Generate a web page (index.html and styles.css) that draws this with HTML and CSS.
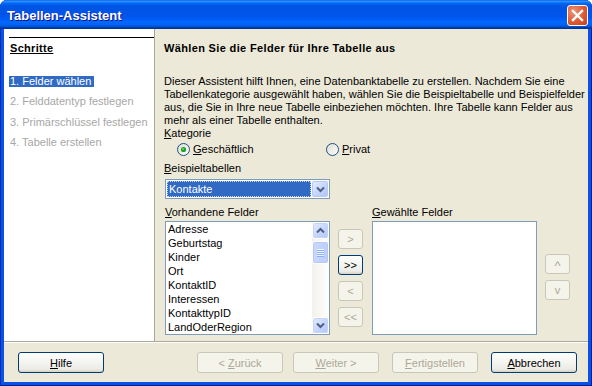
FILE: index.html
```html
<!DOCTYPE html>
<html lang="de">
<head>
<meta charset="utf-8">
<title>Tabellen-Assistent</title>
<link rel="stylesheet" href="styles.css">
</head>
<body>
<div class="window">
  <div class="titlebar">
    <span class="title">Tabellen-Assistent</span>
    <span class="close">
      <svg width="13" height="13" viewBox="0 0 13 13"><path d="M2 2 L11 11 M11 2 L2 11" stroke="#fff" stroke-width="2.4" stroke-linecap="square"/></svg>
    </span>
  </div>
  <div class="client">
    <div class="main">
      <div class="steps">
        <div class="steps-head">Schritte</div>
        <ul class="step-list">
          <li class="step"><span class="step-text active">1. Felder wählen</span></li>
          <li class="step"><span class="step-text">2. Felddatentyp festlegen</span></li>
          <li class="step"><span class="step-text">3. Primärschlüssel festlegen</span></li>
          <li class="step"><span class="step-text">4. Tabelle erstellen</span></li>
        </ul>
      </div>
      <div class="content">
        <h1 class="heading">Wählen Sie die Felder für Ihre Tabelle aus</h1>
        <p class="intro">Dieser Assistent hilft Ihnen, eine Datenbanktabelle zu erstellen. Nachdem Sie eine<br>Tabellenkategorie ausgewählt haben, wählen Sie die Beispieltabelle und Beispielfelder<br>aus, die Sie in Ihre neue Tabelle einbeziehen möchten. Ihre Tabelle kann Felder aus<br>mehr als einer Tabelle enthalten.</p>
        <div class="label"><u>K</u>ategorie</div>
        <div class="radios">
          <label class="radio">
            <svg class="radio-icon" width="13" height="13" viewBox="0 0 13 13">
              <defs><linearGradient id="rg" x1="0" y1="0" x2="1" y2="1"><stop offset="0" stop-color="#DCDBD2"/><stop offset="1" stop-color="#FFFFFF"/></linearGradient></defs>
              <circle cx="6.5" cy="6.5" r="6" fill="url(#rg)" stroke="#1C5180"/>
              <circle cx="6.5" cy="6.5" r="2.6" fill="#21A121"/>
              <circle cx="6" cy="6" r="1" fill="#6FD46F"/>
            </svg>
            <span><u>G</u>eschäftlich</span>
          </label>
          <label class="radio">
            <svg class="radio-icon" width="13" height="13" viewBox="0 0 13 13">
              <circle cx="6.5" cy="6.5" r="6" fill="url(#rg)" stroke="#1C5180"/>
            </svg>
            <span><u>P</u>rivat</span>
          </label>
        </div>
        <div class="label label-gap"><u>B</u>eispieltabellen</div>
        <div class="combo">
          <div class="combo-value">Kontakte</div>
          <div class="combo-btn">
            <svg width="9" height="7" viewBox="0 0 9 7"><path d="M1 1.5 L4.5 5 L8 1.5" fill="none" stroke="#4D6185" stroke-width="2"/></svg>
          </div>
        </div>
        <div class="fields">
          <div class="label field-label"><u>V</u>orhandene Felder</div>
          <div class="label field-label right-label"><u>G</u>ewählte Felder</div>
          <div class="listbox available">
            <ul class="items">
              <li>Adresse</li>
              <li>Geburtstag</li>
              <li>Kinder</li>
              <li>Ort</li>
              <li>KontaktID</li>
              <li>Interessen</li>
              <li>KontakttypID</li>
              <li>LandOderRegion</li>
            </ul>
            <div class="scrollbar">
              <div class="sb-btn">
                <svg width="9" height="7" viewBox="0 0 9 7"><path d="M1 5.5 L4.5 2 L8 5.5" fill="none" stroke="#4D6185" stroke-width="2"/></svg>
              </div>
              <div class="sb-track">
                <div class="sb-thumb"><span></span><span></span><span></span><span></span></div>
              </div>
              <div class="sb-btn">
                <svg width="9" height="7" viewBox="0 0 9 7"><path d="M1 1.5 L4.5 5 L8 1.5" fill="none" stroke="#4D6185" stroke-width="2"/></svg>
              </div>
            </div>
          </div>
          <div class="move-btns">
            <button class="btn small" disabled>&gt;</button>
            <button class="btn small">&gt;&gt;</button>
            <button class="btn small" disabled>&lt;</button>
            <button class="btn small" disabled>&lt;&lt;</button>
          </div>
          <div class="listbox selected"></div>
          <div class="order-btns">
            <button class="btn small caret" disabled>^</button>
            <button class="btn small" disabled>v</button>
          </div>
        </div>
      </div>
    </div>
    <div class="buttonbar">
      <button class="btn wide"><u>H</u>ilfe</button>
      <button class="btn wide back" disabled>&lt; <u>Z</u>urück</button>
      <button class="btn wide next" disabled><u>W</u>eiter &gt;</button>
      <button class="btn wide finish" disabled><u>F</u>ertigstellen</button>
      <button class="btn wide cancel"><u>A</u>bbrechen</button>
    </div>
  </div>
</div>
</body>
</html>
```
FILE: styles.css
```css
html, body {
  margin: 0;
  padding: 0;
  background: #ffffff;
}

body {
  font-family: "Liberation Sans", Arial, sans-serif;
  font-size: 11px;
  color: #000;
}

.window {
  width: 592px;
  height: 386px;
  display: flex;
  flex-direction: column;
  background: #0A52E6;
  border-radius: 7px 7px 0 0;
  box-shadow: inset 1px 0 #0030B0, inset -1px 0 #001C98, inset 0 -1px #001C98;
  overflow: hidden;
}

.titlebar {
  height: 29px;
  flex: none;
  display: flex;
  align-items: center;
  justify-content: space-between;
  padding: 1px 4px 0 7px;
  box-sizing: border-box;
  background: linear-gradient(to bottom, #0058ee 0%, #3593ff 4%, #288eff 6%, #127dff 8%, #036ffc 10%, #0262ee 14%, #0057e5 20%, #0054e3 24%, #0055eb 56%, #005bf5 66%, #026afe 76%, #0062ef 86%, #0052d6 92%, #0040ab 94%, #003092 100%);
  border-radius: 7px 7px 0 0;
}

.title {
  color: #fff;
  font-weight: bold;
  font-size: 13px;
  text-shadow: 1px 1px #0F1089;
}

.close {
  width: 21px;
  height: 21px;
  box-sizing: border-box;
  border: 1px solid #fff;
  border-radius: 3px;
  background: radial-gradient(circle at 30% 30%, #EC9277 0%, #DE5A35 55%, #C4401A 100%);
  display: flex;
  align-items: center;
  justify-content: center;
}

.client {
  flex: 1;
  margin: 0 4px 4px;
  background: #ECE9D8;
  display: flex;
  flex-direction: column;
}

.main {
  height: 312px;
  flex: none;
  display: flex;
  border-bottom: 1px solid #ACA899;
  box-shadow: 0 1px #FFFFFF;
}

.steps {
  width: 151px;
  box-sizing: border-box;
  background: #fff;
  border-right: 1px solid #ACA899;
  padding-left: 5px;
}

.steps-head {
  margin-top: 8px;
  border-top: 1px solid #000;
  padding-top: 4px;
  padding-left: 1px;
  line-height: 13px;
  font-weight: bold;
  letter-spacing: 0.3px;
  text-decoration: underline;
}

.step-list {
  list-style: none;
  margin: 16px 0 0;
  padding: 0;
}

.step {
  height: 20.5px;
  display: flex;
  align-items: center;
}

.step-text {
  line-height: 11px;
  padding: 0 1px;
  color: #A7A7A7;
}

.step-text.active {
  background: #316AC5;
  color: #fff;
  padding-right: 3px;
}

.content {
  flex: 1;
  padding: 12px 0 0 9px;
}

.heading {
  margin: 0;
  font-size: 11px;
  font-weight: bold;
  line-height: 14px;
  letter-spacing: 0.35px;
}

.intro {
  margin: 20px 0 0;
  line-height: 13px;
  white-space: nowrap;
}

.label {
  line-height: 13px;
  white-space: nowrap;
}

.label-gap {
  margin-top: 6px;
}

.radios {
  display: flex;
  margin-top: 3px;
  padding-left: 13px;
  height: 13px;
}

.radio {
  width: 149px;
  display: flex;
  align-items: center;
  gap: 3px;
  line-height: 13px;
}

.radio-icon {
  flex: none;
}

.combo {
  margin: 4px 0 0 1px;
  width: 165px;
  height: 20px;
  box-sizing: border-box;
  border: 1px solid #7F9DB9;
  background: #fff;
  display: flex;
  align-items: center;
  padding: 1px;
  gap: 1px;
}

.combo-value {
  flex: 1;
  height: 16px;
  box-sizing: border-box;
  background: #316AC5;
  color: #fff;
  outline: 1px dotted #C8D4EA;
  outline-offset: -1px;
  line-height: 16px;
  padding-left: 2px;
}

.combo-btn {
  width: 16px;
  height: 16px;
  box-sizing: border-box;
  border: 1px solid #B9CAF0;
  border-radius: 2px;
  background: linear-gradient(135deg, #E2EBFE 0%, #C3D3FD 60%, #B1C5F8 100%);
  display: flex;
  align-items: center;
  justify-content: center;
}

.fields {
  margin: 7px 0 0 1px;
  display: grid;
  grid-template-columns: 165px 26px 165px 25px;
  grid-template-rows: 13px 114px;
  column-gap: 8px;
  row-gap: 2px;
}

.field-label {
  grid-row: 1;
}

.right-label {
  grid-column: 3;
}

.listbox {
  grid-row: 2;
  box-sizing: border-box;
  border: 1px solid #7F9DB9;
  background: #fff;
}

.available {
  grid-column: 1;
  display: flex;
}

.selected {
  grid-column: 3;
}

.items {
  list-style: none;
  margin: 0;
  padding: 0;
  flex: 1;
}

.items li {
  height: 14px;
  line-height: 14px;
  padding-left: 2px;
}

.scrollbar {
  width: 17px;
  display: flex;
  flex-direction: column;
  background: linear-gradient(to right, #F3F1EC, #FEFEFB);
}

.sb-btn {
  width: 17px;
  height: 17px;
  box-sizing: border-box;
  border: 1px solid #fff;
  border-radius: 3px;
  background: linear-gradient(135deg, #E4ECFE 0%, #C6D5FC 55%, #B2C6F7 100%);
  box-shadow: inset 0 0 0 1px #C3D3FA;
  display: flex;
  align-items: center;
  justify-content: center;
}

.sb-track {
  flex: 1;
  padding-top: 2px;
}

.sb-thumb {
  height: 23px;
  box-sizing: border-box;
  border: 1px solid #fff;
  border-radius: 3px;
  background: linear-gradient(to right, #C9D8FC, #BCCEFA);
  box-shadow: inset 0 0 0 1px #B5C8F6;
  display: flex;
  flex-direction: column;
  align-items: center;
  justify-content: center;
  gap: 1px;
}

.sb-thumb span {
  width: 7px;
  height: 1px;
  background: #EEF4FE;
  box-shadow: 0 1px #8CB0F8;
}

.move-btns {
  grid-column: 2;
  grid-row: 2;
  display: flex;
  flex-direction: column;
  padding-top: 8px;
  gap: 6px;
}

.order-btns {
  grid-column: 4;
  grid-row: 2;
  display: flex;
  flex-direction: column;
  padding-top: 33px;
  gap: 6px;
}

.btn {
  box-sizing: border-box;
  height: 20px;
  margin: 0;
  padding: 0;
  border: 1px solid #003C74;
  border-radius: 3px;
  background: linear-gradient(to bottom, #FFFFFF 0%, #F6F6F3 40%, #ECEBE6 85%, #D6D0C5 100%);
  font: inherit;
  font-size: 11px;
  color: #000;
  line-height: 18px;
  text-align: center;
}

.btn:disabled {
  border-color: #C9C7BA;
  background: #F5F4EA;
  color: #ACA899;
}

.small {
  width: 25px;
}

.caret {
  font-size: 13px;
  padding-top: 4px;
  line-height: 14px;
}

.buttonbar {
  flex: 1;
  display: flex;
  align-items: center;
  padding: 1px 11px 0 14px;
}

.wide {
  width: 86px;
  height: 21px;
}

.back {
  margin-left: auto;
}

.next {
  margin-left: 10px;
}

.finish {
  margin-left: 13px;
}

.cancel {
  margin-left: 13px;
}
```
